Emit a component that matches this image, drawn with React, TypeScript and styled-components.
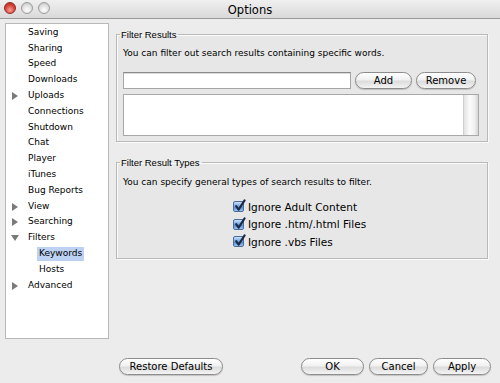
import React from "react";
import styled, { createGlobalStyle } from "styled-components";

const GlobalStyle = createGlobalStyle`
  html, body {
    margin: 0;
    padding: 0;
    background: #ececec;
  }
  body {
    font-family: "DejaVu Sans", "Liberation Sans", sans-serif;
    color: #000;
  }
`;

const Window = styled.div`
  width: 500px;
  height: 383px;
  display: flex;
  flex-direction: column;
  background: #ececec;
  overflow: hidden;
`;

const TitleBar = styled.div`
  height: 17px;
  flex-shrink: 0;
  position: relative;
  display: flex;
  align-items: center;
  justify-content: center;
  padding-top: 1px;
  background: linear-gradient(#f0f0f0, #d9d9d9);
  border-bottom: 1px solid #9a9a9a;
  font-size: 11.5px;
`;

const Lights = styled.div`
  position: absolute;
  left: 4px;
  top: 2px;
  display: flex;
  gap: 5px;
`;

const Light = styled.span<{ $red?: boolean }>`
  width: 12px;
  height: 12px;
  border-radius: 50%;
  box-sizing: border-box;
  border: 1px solid ${(p) => (p.$red ? "#8f2a22" : "#9c9c9c")};
  background: ${(p) =>
    p.$red
      ? "radial-gradient(circle at 50% 70%, #f8a095, #d9433a 55%, #a52a22)"
      : "radial-gradient(circle at 50% 70%, #ffffff, #dcdcdc 60%, #b9b9b9)"};
`;

const Main = styled.div`
  display: flex;
  padding: 4px 0 0 5px;
  gap: 7px;
`;

const Sidebar = styled.div`
  width: 104px;
  height: 316px;
  box-sizing: border-box;
  background: #fff;
  border: 1px solid #b8b8b8;
  padding-top: 1px;
  font-size: 9px;
`;

const NavItem = styled.div<{ $depth?: number }>`
  height: 15.8px;
  display: flex;
  align-items: center;
  padding-left: ${(p) => (p.$depth ? 31 : 4)}px;
`;

const Arrow = styled.span`
  width: 12px;
  height: 15px;
  display: flex;
  align-items: center;
  flex-shrink: 0;
  margin-right: 4px;
  svg {
    margin-left: 1px;
  }
`;

const NavLabel = styled.span<{ $selected?: boolean }>`
  padding: 1px 2px 2px;
  line-height: 11px;
  background: ${(p) => (p.$selected ? "#bdd2f2" : "transparent")};
`;

const Content = styled.div`
  width: 372px;
  padding-top: 6px;
  display: flex;
  flex-direction: column;
  gap: 15px;
`;

const Group = styled.fieldset<{ $h: number }>`
  margin: 0;
  height: ${(p) => p.$h}px;
  box-sizing: border-box;
  border: 1px solid #b9b9b9;
  border-radius: 0;
  padding: 0 7px 0 6px;
  background: rgba(0, 0, 0, 0.018);
  box-shadow: inset 1px 1px 0 #fafafa, 1px 1px 0 #fafafa;
`;

const Legend = styled.legend`
  font-family: "Liberation Sans", Arial, sans-serif;
  font-size: 9.5px;
  padding: 0 2px 0 1px;
  margin-left: -3px;
  line-height: 11px;
`;

const Desc = styled.div<{ $top: number }>`
  font-size: 9px;
  margin-top: ${(p) => p.$top}px;
  line-height: 12px;
`;

const InputRow = styled.div`
  display: flex;
  align-items: center;
  margin-top: 13px;
  gap: 4px;
`;

const TextInput = styled.div`
  width: 228px;
  height: 17px;
  box-sizing: border-box;
  background: #fff;
  border: 1px solid #a5a5a5;
  border-top-color: #8a8a8a;
  box-shadow: inset 0 1px 0 #dcdcdc;
`;

const Button = styled.button<{ $w: number }>`
  width: ${(p) => p.$w}px;
  height: 17px;
  padding: 0;
  box-sizing: border-box;
  font-family: "DejaVu Sans", sans-serif;
  font-size: 10px;
  color: #000;
  border: 1px solid #8c8c8c;
  border-radius: 9px;
  background: linear-gradient(#ffffff 0%, #f1f1f1 45%, #dcdcdc 55%, #f4f4f4 100%);
  box-shadow: 0 1px 1px rgba(0, 0, 0, 0.18);
  display: flex;
  align-items: center;
  justify-content: center;
  line-height: 1;
`;

const ListBox = styled.div`
  margin-top: 5px;
  width: 356px;
  height: 42px;
  box-sizing: border-box;
  background: #fff;
  border: 1px solid #a8a8a8;
  display: flex;
  justify-content: flex-end;
`;

const ScrollTrack = styled.div`
  width: 14px;
  height: 100%;
  background: linear-gradient(90deg, #e2e2e2, #fbfbfb 40%, #f3f3f3 70%, #d6d6d6);
  border-left: 1px solid #cfcfcf;
`;

const CheckList = styled.div`
  margin: 12px auto 0;
  display: flex;
  flex-direction: column;
  gap: 4.5px;
  width: fit-content;
  transform: translateX(-2px);
`;

const CheckRow = styled.label`
  display: flex;
  align-items: center;
  gap: 4px;
  font-size: 10.5px;
  height: 13px;
`;

const Box = styled.span`
  width: 11px;
  height: 11px;
  box-sizing: border-box;
  border: 1px solid #4a6d9c;
  border-radius: 2px;
  background: linear-gradient(#c9e0f8, #6fa0de 50%, #4f86d3 55%, #9cc4f0);
  position: relative;
  flex-shrink: 0;
  svg {
    position: absolute;
    left: 0px;
    top: -3px;
  }
`;

const Footer = styled.div`
  display: flex;
  justify-content: space-between;
  padding: 19px 9px 0 119px;
`;

const ButtonGroup = styled.div`
  display: flex;
  gap: 5px;
`;

const Triangle = ({ open }: { open?: boolean }) => (
  <svg width="8" height="8" viewBox="0 0 8 8">
    {open ? (
      <polygon points="0,1 8,1 4,7" fill="#7a7a7a" />
    ) : (
      <polygon points="1,0 7,4 1,8" fill="#7a7a7a" />
    )}
  </svg>
);

type Nav = { label: string; arrow?: "open" | "closed"; depth?: number; selected?: boolean };

const nav: Nav[] = [
  { label: "Saving" },
  { label: "Sharing" },
  { label: "Speed" },
  { label: "Downloads" },
  { label: "Uploads", arrow: "closed" },
  { label: "Connections" },
  { label: "Shutdown" },
  { label: "Chat" },
  { label: "Player" },
  { label: "iTunes" },
  { label: "Bug Reports" },
  { label: "View", arrow: "closed" },
  { label: "Searching", arrow: "closed" },
  { label: "Filters", arrow: "open" },
  { label: "Keywords", depth: 1, selected: true },
  { label: "Hosts", depth: 1 },
  { label: "Advanced", arrow: "closed" },
];

const checks = ["Ignore Adult Content", "Ignore .htm/.html Files", "Ignore .vbs Files"];

const Check = ({ label }: { label: string }) => (
  <CheckRow>
    <Box>
      <svg width="12" height="13" viewBox="0 0 12 13">
        <path d="M2.2 7.2 L4.6 10.6 L10.6 1.4" fill="none" stroke="#1b2a44" strokeWidth="2.1" strokeLinecap="round" strokeLinejoin="round" />
      </svg>
    </Box>
    <span>{label}</span>
  </CheckRow>
);

export default function App() {
  return (
    <Window>
      <GlobalStyle />
      <TitleBar>
        <Lights>
          <Light $red />
          <Light />
          <Light />
        </Lights>
        Options
      </TitleBar>
      <Main>
        <Sidebar>
          {nav.map((n) => (
            <NavItem key={n.label} $depth={n.depth}>
              {!n.depth && (
                <Arrow>{n.arrow && <Triangle open={n.arrow === "open"} />}</Arrow>
              )}
              <NavLabel $selected={n.selected}>{n.label}</NavLabel>
            </NavItem>
          ))}
        </Sidebar>
        <Content>
          <Group $h={113}>
            <Legend>Filter Results</Legend>
            <Desc $top={7}>You can filter out search results containing specific words.</Desc>
            <InputRow>
              <TextInput />
              <Button $w={57}>Add</Button>
              <Button $w={60}>Remove</Button>
            </InputRow>
            <ListBox>
              <ScrollTrack />
            </ListBox>
          </Group>
          <Group $h={102}>
            <Legend>Filter Result Types</Legend>
            <Desc $top={8}>You can specify general types of search results to filter.</Desc>
            <CheckList>
              {checks.map((c) => (
                <Check key={c} label={c} />
              ))}
            </CheckList>
          </Group>
        </Content>
      </Main>
      <Footer>
        <Button $w={104}>Restore Defaults</Button>
        <ButtonGroup>
          <Button $w={63}>OK</Button>
          <Button $w={59}>Cancel</Button>
          <Button $w={58}>Apply</Button>
        </ButtonGroup>
      </Footer>
    </Window>
  );
}
